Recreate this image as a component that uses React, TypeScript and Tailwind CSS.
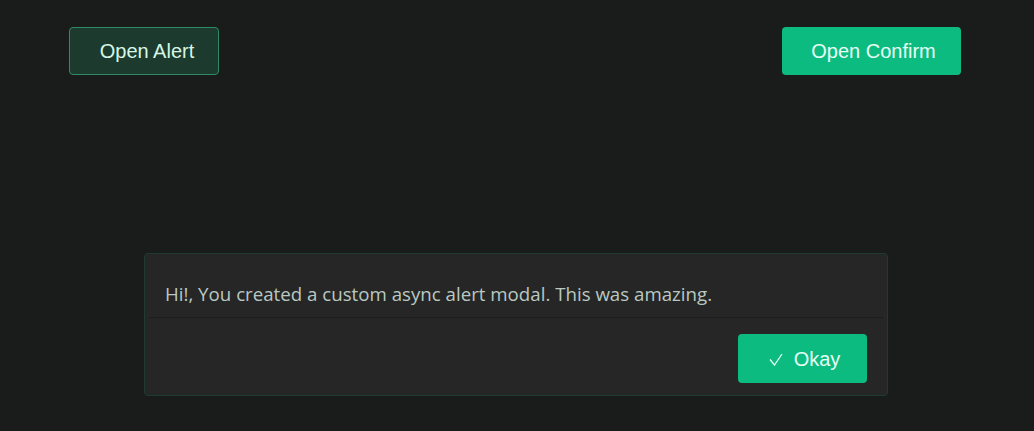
import React from "react";

const App: React.FC = () => {
    return <div className="min-h-[431px] bg-[#1a1b1b] pt-[27px] font-['Liberation_Sans',Arial,sans-serif]">
        <div className="flex justify-between pl-[69px] pr-[73px]">
            <button className="h-[48px] w-[150px] rounded-[4px] border border-[#2f8a66] bg-[#1d3a2e] pl-[6px] text-[20px] text-[#d4f7e6]">
                Open Alert
            </button>
            <button className="h-[48px] w-[179px] rounded-[4px] bg-[#0cbb80] pl-[4px] text-[20px] text-[#e6fff4]">
                Open Confirm
            </button>
        </div>
        <div className="ml-[144px] mt-[178px] w-[744px] rounded-[4px] border border-[#1e3b30] bg-[#262626]">
            <div className="px-[20px] pt-[26px] pb-[10px]">
                <p className="font-['Open_Sans',sans-serif] text-[18.7px] leading-[27px] text-[#b9c9c2]">
                    Hi!, You created a custom async alert modal. This was amazing.
                </p>
            </div>
            <div className="mx-[4px] h-px bg-[#1d1d1d]"></div>
            <div className="flex justify-end px-[20px] pt-[16px] pb-[12px]">
                <button className="flex h-[49px] w-[129px] items-center justify-center gap-[11px] rounded-[4px] bg-[#0cbb80] pl-[4px] text-[20px] text-[#e6fff4]">
                    <svg width="14" height="13" viewBox="0 0 14 13" fill="none" className="mt-[2px]">
                        <polyline points="1,6.5 5.5,12 13,1" stroke="#e6fff4" strokeWidth="1.3" />
                    </svg>
                    <span>Okay</span>
                </button>
            </div>
        </div>
    </div>
}

export default App
